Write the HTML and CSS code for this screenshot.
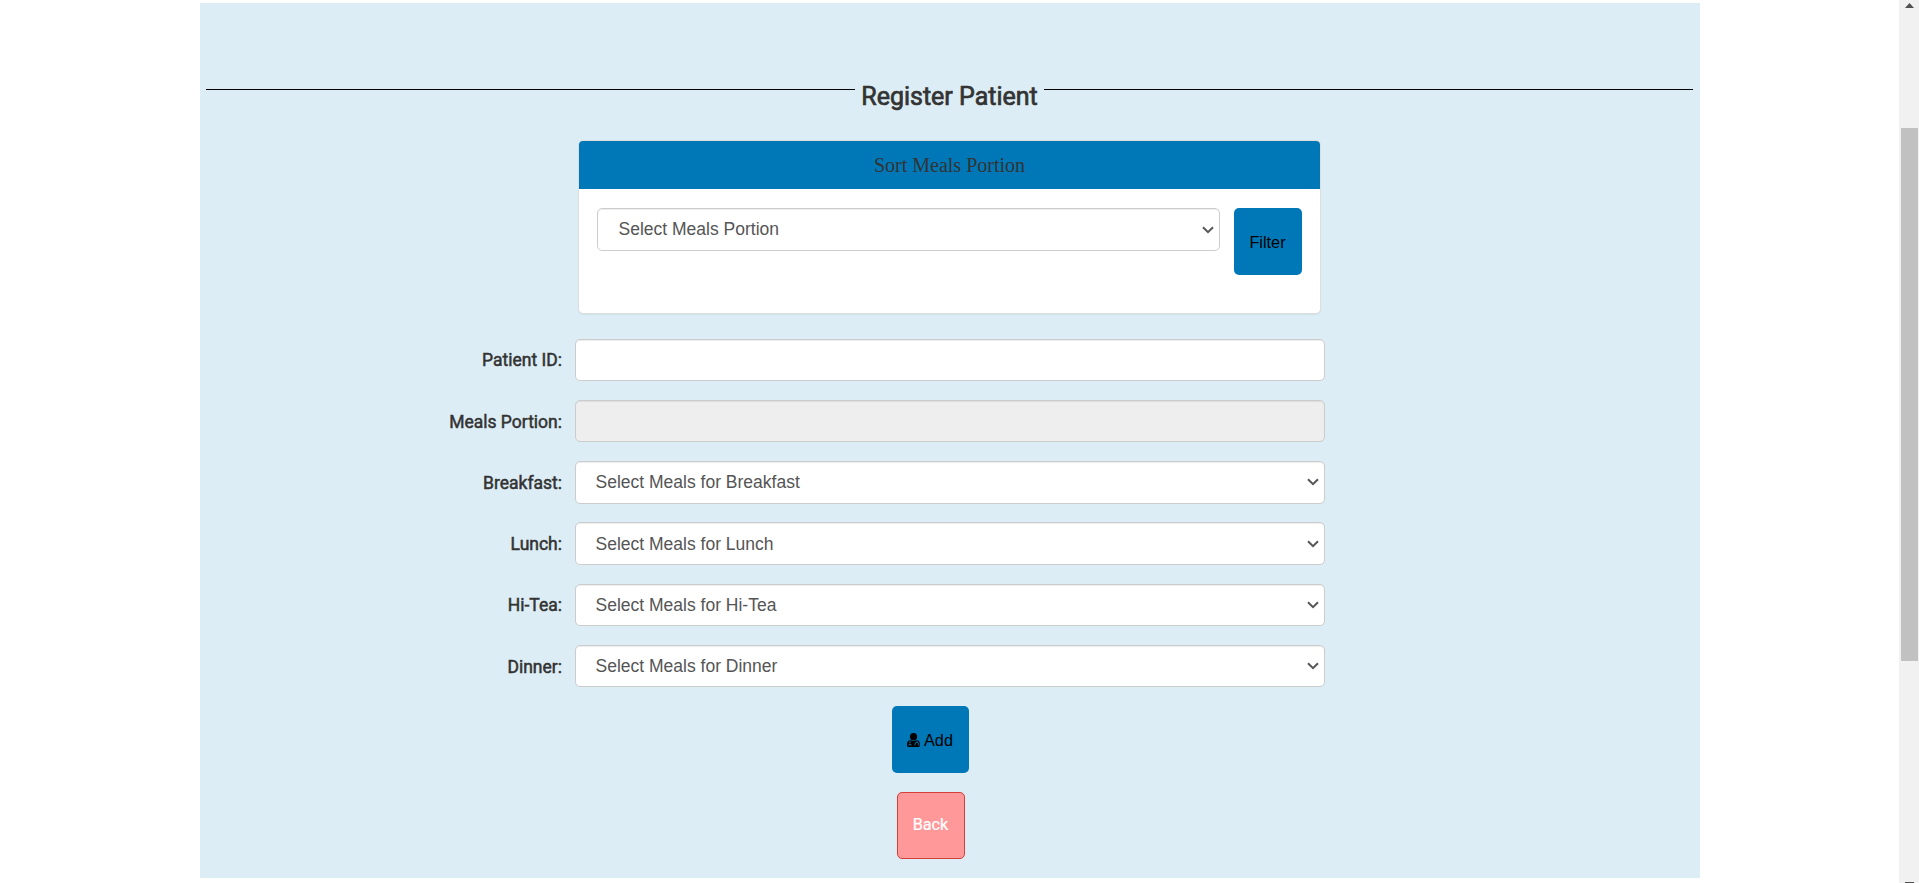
FILE: index.html
```html
<!DOCTYPE html>
<html lang="en">
<head>
<meta charset="utf-8">
<title>Register Patient</title>
<link rel="stylesheet" href="styles.css">
</head>
<body>
<div class="page">
  <main class="panel">
    <div class="heading">
      <span class="rule"></span>
      <h1 class="title">Register Patient</h1>
      <span class="rule"></span>
    </div>

    <section class="card">
      <div class="card-head">Sort Meals Portion</div>
      <div class="card-body">
        <div class="picker picker-wide">
          <select class="control"><option>Select Meals Portion</option></select>
          <svg class="chevron" viewBox="0 0 12 8"><path d="M1 1.3 6 6.2 11 1.3"/></svg>
        </div>
        <button class="btn btn-filter">Filter</button>
      </div>
    </section>

    <form class="fields">
      <div class="row"><label class="label">Patient ID:</label>
        <div class="picker"><input class="control" type="text"></div></div>
      <div class="row"><label class="label">Meals Portion:</label>
        <div class="picker"><input class="control" type="text" disabled></div></div>
      <div class="row"><label class="label">Breakfast:</label>
        <div class="picker"><select class="control"><option>Select Meals for Breakfast</option></select><svg class="chevron" viewBox="0 0 12 8"><path d="M1 1.3 6 6.2 11 1.3"/></svg></div></div>
      <div class="row"><label class="label">Lunch:</label>
        <div class="picker"><select class="control"><option>Select Meals for Lunch</option></select><svg class="chevron" viewBox="0 0 12 8"><path d="M1 1.3 6 6.2 11 1.3"/></svg></div></div>
      <div class="row"><label class="label">Hi-Tea:</label>
        <div class="picker"><select class="control"><option>Select Meals for Hi-Tea</option></select><svg class="chevron" viewBox="0 0 12 8"><path d="M1 1.3 6 6.2 11 1.3"/></svg></div></div>
      <div class="row"><label class="label">Dinner:</label>
        <div class="picker"><select class="control"><option>Select Meals for Dinner</option></select><svg class="chevron" viewBox="0 0 12 8"><path d="M1 1.3 6 6.2 11 1.3"/></svg></div></div>
    </form>

    <div class="actions">
      <button class="btn btn-add">
        <svg class="icon" viewBox="0 0 13 14">
          <circle cx="6.500" cy="3.700" r="3.600"/>
          <path d="M3.300 6.800C1 7.300 0 9.300 0 12c0 1.400.8 2 2 2h9c1.200 0 2-.6 2-2 0-2.700-1-4.700-3.300-5.200C8.300 8.200 4.700 8.200 3.300 6.800z"/>
          <path class="detail" d="M3 7.400v3.200M1.700 12.600a1.300 1.300 0 1 1 2.600 0M10 7.400v1.900M8 12.600v-1.500a1.800 1.800 0 0 1 3.600 0v1.500"/>
        </svg>
        <span>Add</span>
      </button>
      <button class="btn btn-back">Back</button>
    </div>
  </main>

  <aside class="scrollbar">
    <span class="arrow-up"></span>
    <span class="thumb"></span>
    <span class="arrow-down"></span>
  </aside>
</div>
</body>
</html>
```

FILE: styles.css
```css
* { box-sizing: border-box; }

body {
  margin: 0;
  background: #fff;
  color: #333;
  font: 17.5px/25px Roboto, "Liberation Sans", sans-serif;
  overflow: hidden;
}

.page {
  display: flex;
  justify-content: space-between;
  height: 883px;
  padding-left: 200px;
}

.panel {
  display: flex;
  flex-direction: column;
  align-items: center;
  width: 1500px;
  height: 875px;
  margin-top: 3px;
  padding-top: 76px;
  background: #dcedf5;
}

.heading {
  display: flex;
  align-items: flex-start;
  align-self: stretch;
  height: 62px;
  padding: 0 7px 0 6px;
}

.rule {
  flex: 1;
  height: 1px;
  margin-top: 10px;
  background: #000;
}

.title {
  width: 189px;
  margin: 0;
  font-size: 25px;
  font-weight: 400;
  line-height: 35px;
  text-align: center;
  white-space: nowrap;
  -webkit-text-stroke: 0.7px #333;
}

.card {
  flex: none;
  width: 743px;
  height: 174px;
  margin-right: 1px;
  margin-top: -1px;
  border: 1px solid #ddd;
  border-radius: 5px;
  background: #fff;
  box-shadow: 0 1px 1px rgba(0, 0, 0, 0.05);
  overflow: hidden;
}

.card-head {
  height: 48px;
  background: #0078b8;
  font: 20px/49px "Liberation Serif", serif;
  text-align: center;
}

.card-body {
  display: flex;
  justify-content: space-between;
  align-items: flex-start;
  padding: 19px 18px;
}

.picker {
  display: grid;
  width: 750px;
  height: 100%;
}

.picker-wide {
  width: 623px;
  height: 43px;
}

.control {
  grid-area: 1 / 1;
  width: 100%;
  height: 100%;
  margin: 0;
  padding: 0 19.5px;
  border: 1px solid #ccc;
  border-radius: 5px;
  background: #fff;
  box-shadow: inset 0 1px 1px rgba(0, 0, 0, 0.075);
  color: #555;
  font: 17.5px "Liberation Sans", Arial, sans-serif;
  appearance: none;
}

.control:disabled { background: #eee; }

.picker-wide .control { padding: 0 20.5px 2px; }

.chevron {
  grid-area: 1 / 1;
  place-self: center end;
  width: 12px;
  height: 8px;
  margin-right: 6px;
  fill: none;
  stroke: #555;
  stroke-width: 2;
  pointer-events: none;
}

.fields {
  display: grid;
  gap: 18.75px;
  margin-top: 24.7px;
  align-self: stretch;
}

.row {
  display: grid;
  grid-template-columns: 362px 750px;
  column-gap: 13px;
  height: 42.5px;
}

.label {
  padding-top: 9.6px;
  text-align: right;
  -webkit-text-stroke: 0.5px #333;
}

.btn {
  width: 68px;
  height: 67px;
  padding: 2px 0 0;
  border: 0;
  border-radius: 5px;
  background: #0078b8;
  color: #000;
  font: 16.25px "Liberation Sans", Arial, sans-serif;
}

.btn-filter { padding-right: 1px; }

.actions {
  display: flex;
  flex-direction: column;
  align-items: center;
  gap: 19px;
  margin: 18.55px 39px 0 0;
}

.btn-add {
  display: flex;
  align-items: center;
  justify-content: center;
  gap: 4px;
  width: 77px;
  padding-right: 1px;
}

.icon {
  width: 13px;
  height: 14px;
}

.icon .detail {
  fill: none;
  stroke: #0078b8;
  stroke-width: 0.9;
}

.btn-back {
  padding: 0 0 2px;
  border: 1px solid #d43f3a;
  background: #ff9999;
  color: #fff;
  font-family: Roboto, sans-serif;
  -webkit-text-stroke: 0.2px #fff;
}

.scrollbar {
  display: flex;
  flex-direction: column;
  align-items: center;
  width: 20px;
  height: 883px;
  padding-top: 3px;
  background: #f1f1f1;
}

.arrow-up {
  width: 9px;
  height: 5px;
  margin-left: 1px;
  background: #505050;
  clip-path: polygon(50% 0, 100% 100%, 0 100%);
}

.thumb {
  flex: none;
  width: 17px;
  height: 533px;
  margin: 120px 0 221px 1px;
  background: #c1c1c1;
}

.arrow-down {
  flex: none;
  width: 9px;
  height: 1px;
  margin-left: 1px;
  background: #505050;
}
```
